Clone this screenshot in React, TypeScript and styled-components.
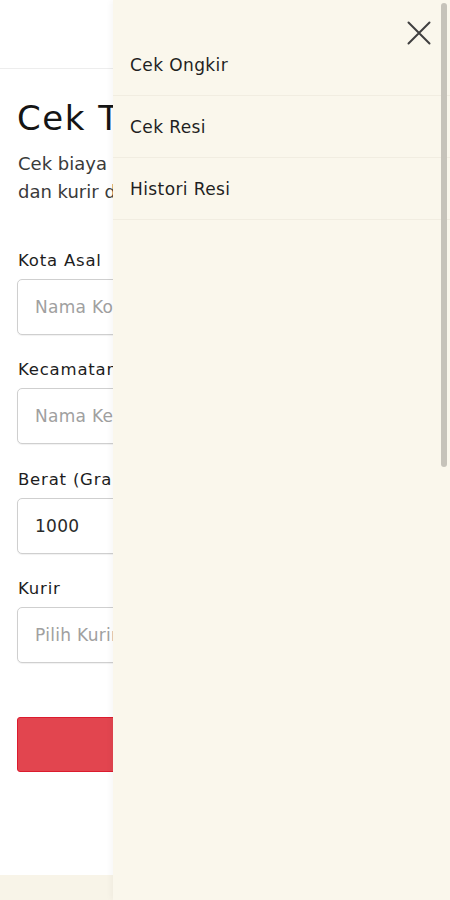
import React from "react";
import styled, { createGlobalStyle } from "styled-components";

const GlobalStyle = createGlobalStyle`
  * { box-sizing: border-box; }
  html, body { margin: 0; padding: 0; background: #ffffff; }
  body {
    font-family: "DejaVu Sans", "Noto Sans", sans-serif;
    color: #1d1d1d;
    -webkit-font-smoothing: antialiased;
  }
`;

const Page = styled.div`
  position: relative;
  width: 450px;
  height: 900px;
  overflow: hidden;
  background: #ffffff;
  display: flex;
  flex-direction: column;
`;

const Header = styled.header`
  height: 69px;
  flex-shrink: 0;
  border-bottom: 1px solid #ededed;
  background: #ffffff;
`;

const Main = styled.main`
  flex: 1;
  padding: 0 17px;
  display: flex;
  flex-direction: column;
`;

const Title = styled.h1`
  margin: 29px 0 0;
  font-size: 34px;
  line-height: 1.2;
  font-weight: 400;
  letter-spacing: 1.5px;
  color: #151515;
  white-space: nowrap;
`;

const Subtitle = styled.p`
  margin: 11px 0 0 1px;
  font-size: 18px;
  line-height: 28px;
  color: #3a3a3a;
  white-space: nowrap;
`;

const Form = styled.form`
  margin-top: 43px;
  display: flex;
  flex-direction: column;
`;

const Field = styled.div`
  display: flex;
  flex-direction: column;
  margin-bottom: 23.5px;
`;

const Label = styled.label`
  font-size: 16.5px;
  line-height: 24px;
  font-weight: 500;
  letter-spacing: 0.8px;
  color: #1d1d1d;
  margin: 0 0 6px 1px;
  white-space: nowrap;
`;

const Input = styled.input`
  height: 56px;
  width: 100%;
  border: 1px solid #cfcfcf;
  border-radius: 5px;
  padding: 0 17px;
  font-family: inherit;
  font-size: 17px;
  letter-spacing: 0.3px;
  color: #2a2a2a;
  background: #ffffff;
  box-shadow: 0 1px 1px rgba(0, 0, 0, 0.06);
  outline: none;
  &::placeholder { color: #a0a0a0; }
`;

const SubmitButton = styled.button`
  margin-top: 30.5px;
  height: 55px;
  width: 100%;
  border: 1px solid #dc1b2e;
  border-radius: 3px;
  background: #e2454f;
  color: #ffffff;
  font-family: inherit;
  font-size: 17px;
`;

const Footer = styled.footer`
  height: 25px;
  flex-shrink: 0;
  background: #f8f4e8;
`;

const Drawer = styled.aside`
  position: absolute;
  top: 0;
  right: 0;
  bottom: 0;
  width: 337px;
  background: #faf7ec;
  box-shadow: -2px 0 6px rgba(0, 0, 0, 0.04);
  padding-top: 34px;
  display: flex;
  flex-direction: column;
`;

const CloseButton = styled.button`
  position: absolute;
  top: 21px;
  right: 19px;
  width: 24px;
  height: 24px;
  padding: 0;
  border: 0;
  background: transparent;
  display: flex;
  align-items: center;
  justify-content: center;
`;

const MenuList = styled.nav`
  display: flex;
  flex-direction: column;
`;

const MenuItem = styled.a`
  height: 62px;
  display: flex;
  align-items: center;
  padding-left: 17px;
  font-size: 17px;
  font-weight: 500;
  letter-spacing: 0.4px;
  color: #1f1f1f;
  text-decoration: none;
  border-bottom: 1px solid #f1ede1;
`;

const ScrollThumb = styled.div`
  position: absolute;
  top: 3px;
  right: 3px;
  width: 6px;
  height: 464px;
  border-radius: 3px;
  background: #c6c3ba;
`;

const menu = ["Cek Ongkir", "Cek Resi", "Histori Resi"];

export default function App() {
  return (
    <>
      <GlobalStyle />
      <Page>
        <Header />
        <Main>
          <Title>Cek Tarif Ongkir</Title>
          <Subtitle>
            Cek biaya pengiriman berdasarkan kota, berat
            <br />
            dan kurir di seluruh Indonesia.
          </Subtitle>
          <Form onSubmit={(e) => e.preventDefault()}>
            <Field>
              <Label>Kota Asal</Label>
              <Input placeholder="Nama Kota Asal" />
            </Field>
            <Field>
              <Label>Kecamatan Tujuan</Label>
              <Input placeholder="Nama Kecamatan Tujuan" />
            </Field>
            <Field>
              <Label>Berat (Gram)</Label>
              <Input defaultValue="1000" />
            </Field>
            <Field>
              <Label>Kurir</Label>
              <Input placeholder="Pilih Kurir" />
            </Field>
            <SubmitButton type="submit">Cek Ongkir</SubmitButton>
          </Form>
        </Main>
        <Footer />
        <Drawer>
          <CloseButton aria-label="Tutup">
            <svg width="24" height="24" viewBox="0 0 24 24">
              <path d="M1.5 1.5 L22.5 22.5 M22.5 1.5 L1.5 22.5" stroke="#3f3f3f" strokeWidth="2" strokeLinecap="round" fill="none" />
            </svg>
          </CloseButton>
          <MenuList>
            {menu.map((m) => (
              <MenuItem key={m} href="#">{m}</MenuItem>
            ))}
          </MenuList>
          <ScrollThumb />
        </Drawer>
      </Page>
    </>
  );
}
